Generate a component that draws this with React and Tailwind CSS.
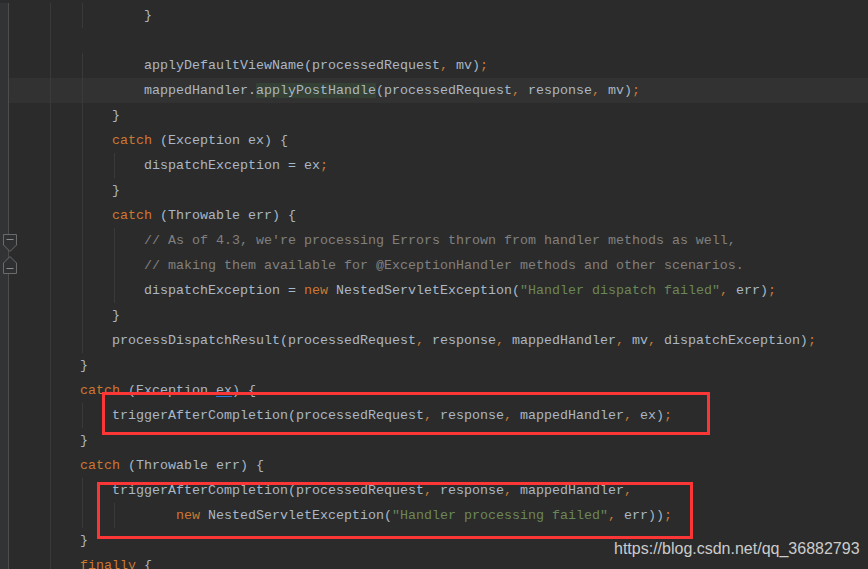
const LINES = [
  { indent: 3, guides: [0, 1], code: '}' },
  { indent: 0, guides: [0, 1], code: '' },
  { indent: 3, guides: [0, 1], code: 'applyDefaultViewName(processedRequest, mv);' },
  { indent: 3, guides: [0, 1], code: 'mappedHandler.', mark: 'applyPostHandle', rest: '(processedRequest, response, mv);', current: true },
  { indent: 2, guides: [0, 1], code: '}' },
  { indent: 2, guides: [0, 1], code: 'catch (Exception ex) {' },
  { indent: 3, guides: [0, 1, 2], code: 'dispatchException = ex;' },
  { indent: 2, guides: [0, 1], code: '}' },
  { indent: 2, guides: [0, 1], code: 'catch (Throwable err) {' },
  { indent: 3, guides: [0, 1, 2], code: "// As of 4.3, we're processing Errors thrown from handler methods as well,", fold: 'start' },
  { indent: 3, guides: [0, 1, 2], code: '// making them available for @ExceptionHandler methods and other scenarios.', fold: 'end' },
  { indent: 3, guides: [0, 1, 2], code: 'dispatchException = new NestedServletException("Handler dispatch failed", err);' },
  { indent: 2, guides: [0, 1], code: '}' },
  { indent: 2, guides: [0, 1], code: 'processDispatchResult(processedRequest, response, mappedHandler, mv, dispatchException);' },
  { indent: 1, guides: [0], code: '}' },
  { indent: 1, guides: [0], code: 'catch (Exception ', underline: 'ex', rest: ') {' },
  { indent: 2, guides: [0, 1], code: 'triggerAfterCompletion(processedRequest, response, mappedHandler, ex);' },
  { indent: 1, guides: [0], code: '}' },
  { indent: 1, guides: [0], code: 'catch (Throwable err) {' },
  { indent: 2, guides: [0, 1], code: 'triggerAfterCompletion(processedRequest, response, mappedHandler,' },
  { indent: 4, guides: [0, 1, 2], code: 'new NestedServletException("Handler processing failed", err));' },
  { indent: 1, guides: [0], code: '}' },
  { indent: 1, guides: [0], code: 'finally {' },
]

const TOKEN_RE = /("[^"]*"|\b(?:catch|new|finally)\b|[,;])/

function Code({ text }) {
  if (text.startsWith('//')) return <span className="text-[#808080]">{text}</span>
  return text.split(TOKEN_RE).map((part, i) => {
    if (!part) return null
    if (part.startsWith('"')) return <span key={i} className="text-[#6a8759]">{part}</span>
    if (/^(catch|new|finally|,|;)$/.test(part)) return <span key={i} className="text-[#cc7832]">{part}</span>
    return <span key={i}>{part}</span>
  })
}

function FoldMarker({ type }) {
  const d = type === 'start' ? 'M0.5 0.5H13.5V11L7 17.5L0.5 11Z' : 'M7 0.5L13.5 7V17.5H0.5V7Z'
  const y = type === 'start' ? 5.5 : 12.5
  return (
    <svg
      width="14"
      height="18"
      viewBox="0 0 14 18"
      className={type === 'start' ? 'absolute left-[3px] top-[6px]' : 'absolute left-[3px] top-[3px]'}
    >
      <path d={d} fill="#2f3032" stroke="#6b6b6b" />
      <path d={`M3.5 ${y}H10.5`} stroke="#8a8a8a" />
    </svg>
  )
}

function Row({ line }) {
  const units = Math.max(line.indent, Math.max(...line.guides) + 1)
  return (
    <div className="relative flex h-[25px]">
      <div className="w-[9px] shrink-0 border-r border-[#4d4d4d] bg-[#313335]" />
      {line.fold ? <FoldMarker type={line.fold} /> : null}
      <div className={`flex flex-1 items-center pl-[39px] ${line.current ? 'bg-[#323232]' : ''}`}>
        {Array.from({ length: units }).map((_, i) => (
          <div key={i} className={`h-full shrink-0 ${i < line.indent ? 'w-[32px]' : 'w-0'}`}>
            {line.guides.includes(i) ? <div className="ml-[2px] h-full w-px bg-[#3a3a3a]" /> : null}
          </div>
        ))}
        <div className="whitespace-pre text-[#a9b7c6]">
          <Code text={line.code} />
          {line.mark ? <span className="bg-[#344134]">{line.mark}</span> : null}
          {line.underline ? (
            <span className="underline decoration-[#287bde] underline-offset-[2px]">{line.underline}</span>
          ) : null}
          {line.rest ? <Code text={line.rest} /> : null}
        </div>
      </div>
    </div>
  )
}

export default function App() {
  return (
    <div
      className="relative h-[569px] w-[868px] overflow-hidden bg-[#2b2b2b] text-[13.333px]"
      style={{ fontFamily: '"Liberation Mono", monospace' }}
    >
      <div className="flex flex-col bg-[#2b2b2b] pt-[3px]">
        {LINES.map((line, i) => (
          <Row key={i} line={line} />
        ))}
        <div className="flex h-[25px]">
          <div className="w-[9px] border-r border-[#4d4d4d] bg-[#313335]" />
        </div>
      </div>

      <div className="absolute left-[102px] top-[392px] h-[43px] w-[608px] border-[3px] border-[#fa3636]" />
      <div className="absolute left-[97px] top-[482px] h-[57px] w-[596px] border-[3px] border-[#fa3636]" />

      <div
        className="absolute left-[614px] top-[540px] text-[16px] leading-[18px] text-[#cbcbcb]"
        style={{ fontFamily: '"Liberation Sans", Arial, sans-serif' }}
      >
        https://blog.csdn.net/qq_36882793
      </div>
    </div>
  )
}
